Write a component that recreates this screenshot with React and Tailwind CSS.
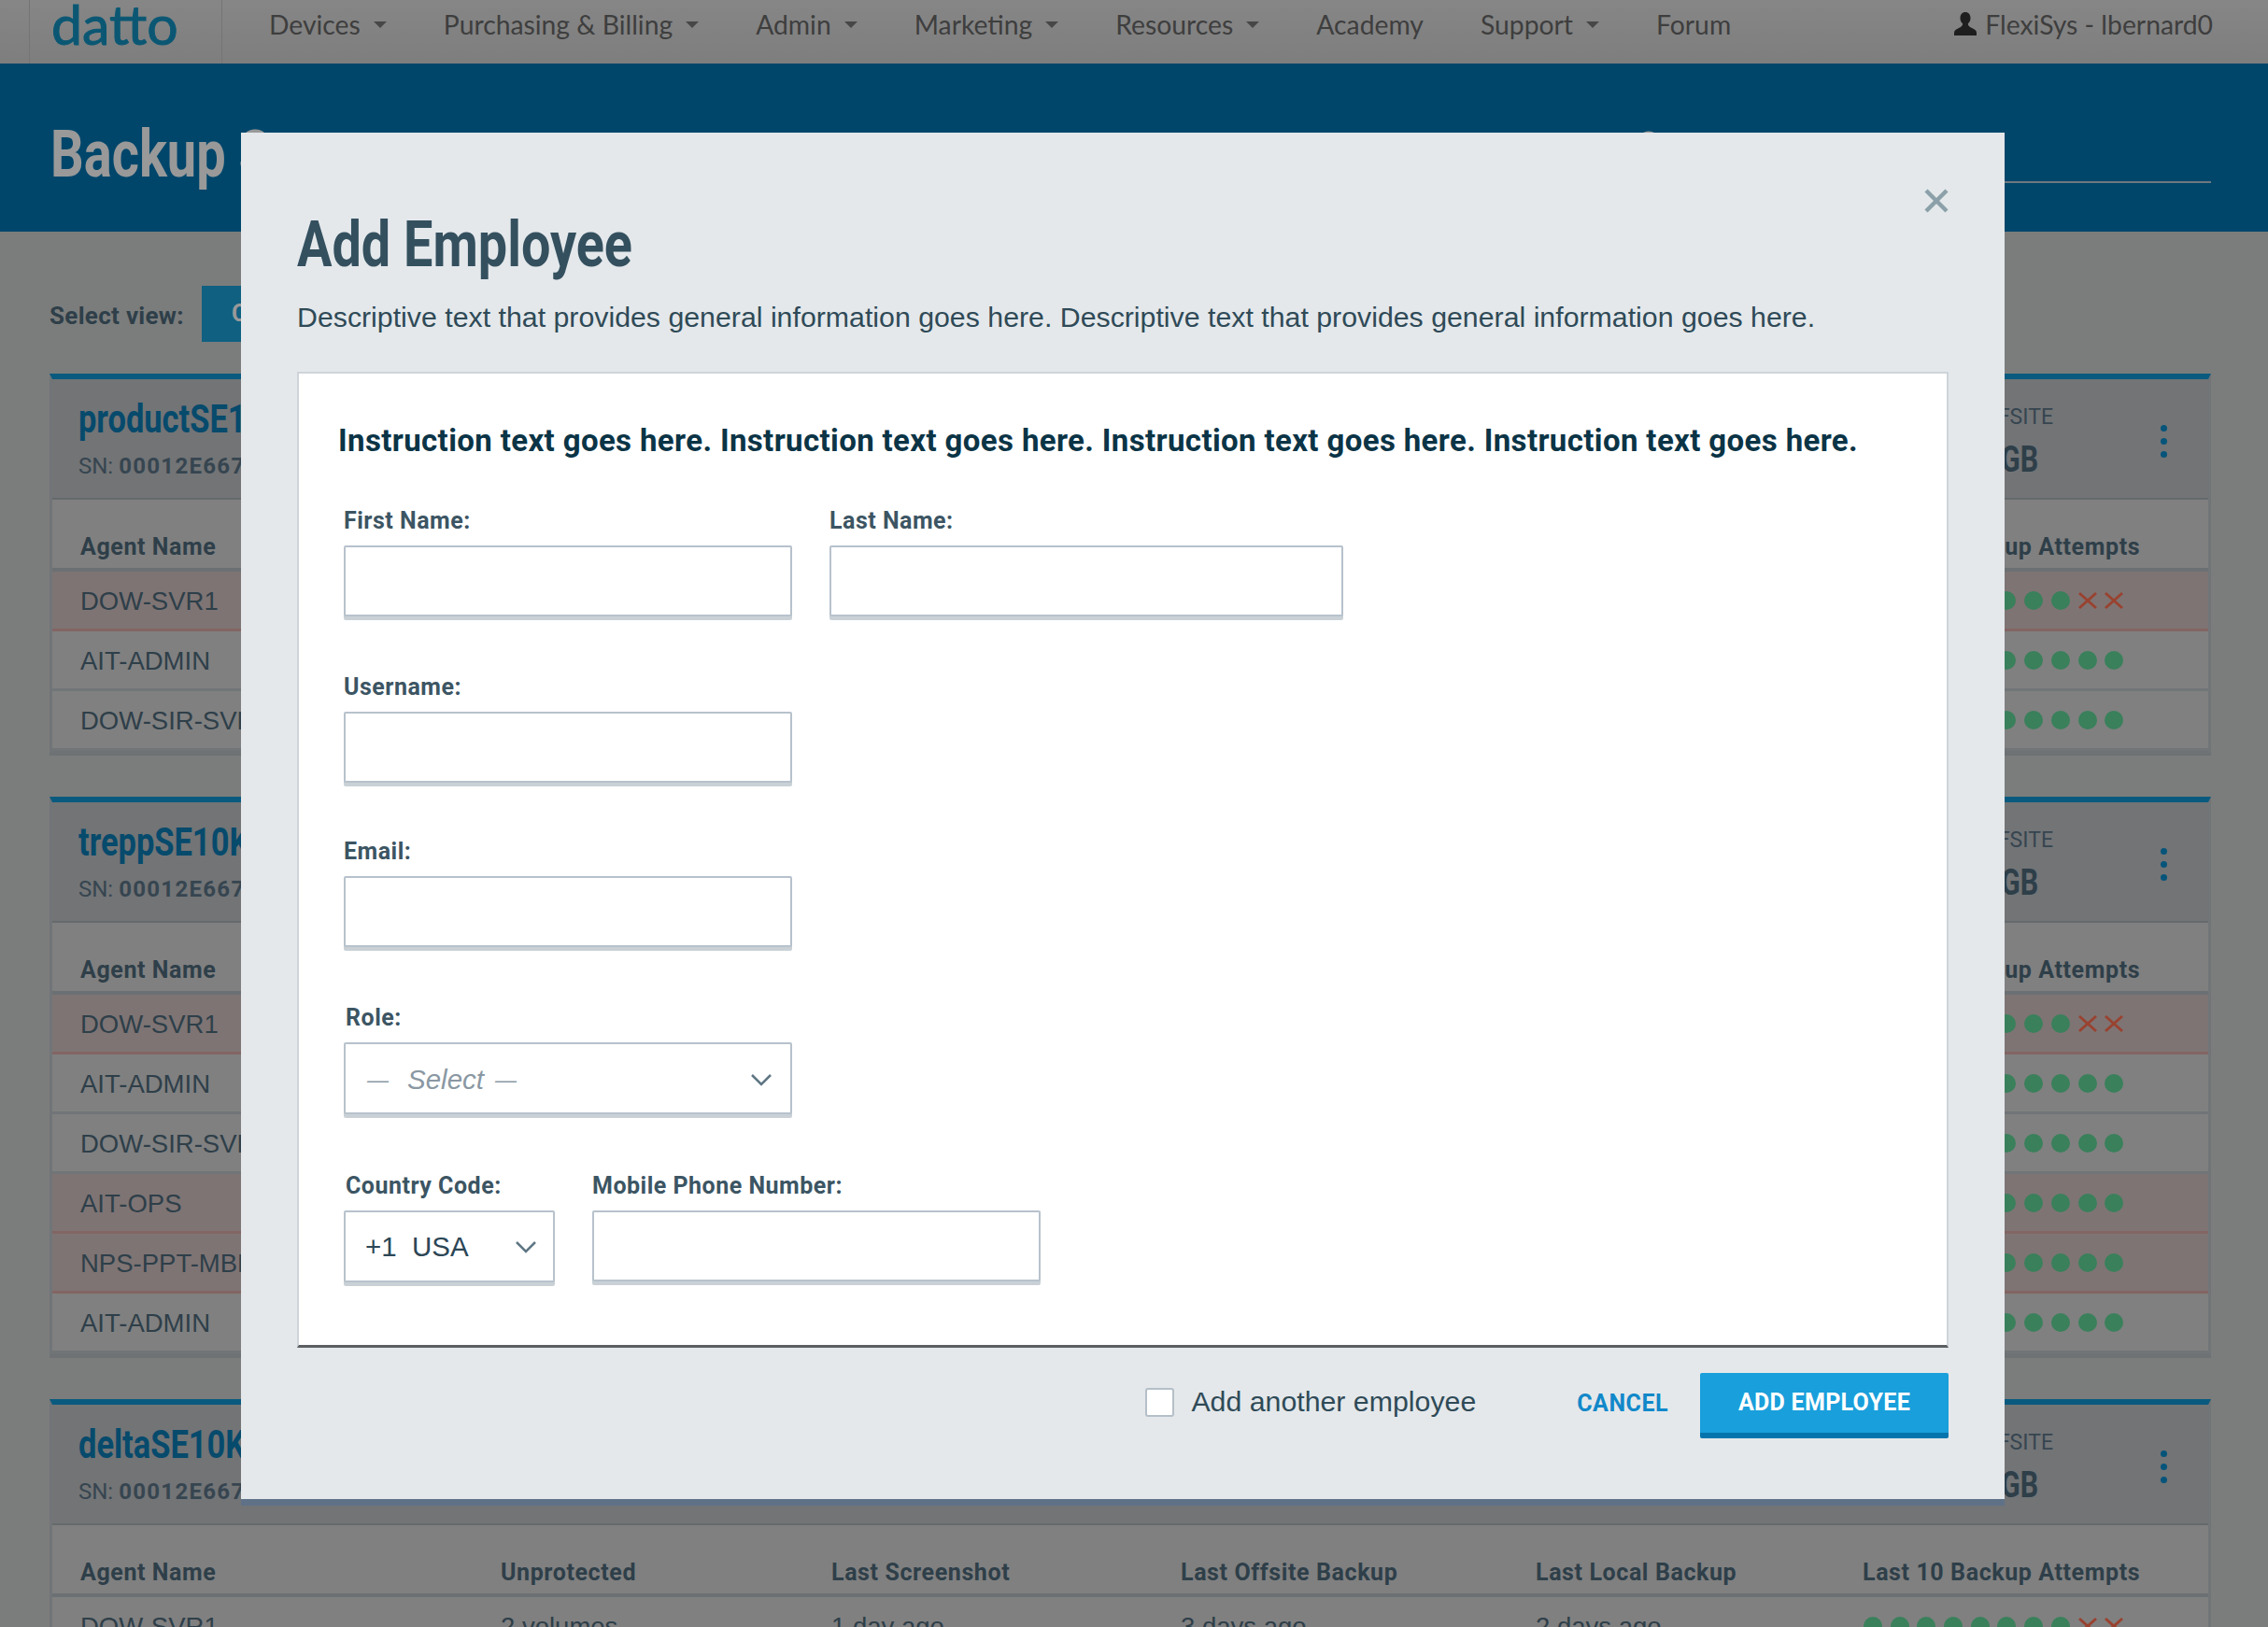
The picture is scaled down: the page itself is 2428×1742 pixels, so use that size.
import { useState } from "react";

const din = "font-['Roboto',sans-serif]";
const helv = "font-['Liberation_Sans',Arial,sans-serif]";
const lato = "font-['Lato',sans-serif]";
// no condensed face is installed, so headings are Roboto squeezed horizontally
const condensed = "font-['Roboto',sans-serif] font-bold inline-block whitespace-nowrap origin-left";

const navItems = [
  { label: "Devices", caret: true },
  { label: "Purchasing & Billing", caret: true },
  { label: "Admin", caret: true },
  { label: "Marketing", caret: true },
  { label: "Resources", caret: true },
  { label: "Academy" },
  { label: "Support", caret: true },
  { label: "Forum" },
];

const cards = [
  {
    name: "productSE10K",
    rows: [
      { agent: "DOW-SVR1", alert: true, fails: 2 },
      { agent: "AIT-ADMIN" },
      { agent: "DOW-SIR-SVR" },
    ],
  },
  {
    name: "treppSE10K",
    rows: [
      { agent: "DOW-SVR1", alert: true, fails: 2 },
      { agent: "AIT-ADMIN" },
      { agent: "DOW-SIR-SVR" },
      { agent: "AIT-OPS", alert: true },
      { agent: "NPS-PPT-MBP", alert: true },
      { agent: "AIT-ADMIN" },
    ],
  },
  {
    name: "deltaSE10K",
    rows: [{ agent: "DOW-SVR1", fails: 2 }],
  },
];

const columns = ["Agent Name", "Unprotected", "Last Screenshot", "Last Offsite Backup", "Last Local Backup", "Last 10 Backup Attempts"];
const tableGrid = "grid grid-cols-[450px_354px_374px_380px_350px_1fr] pl-[30px]";
const labelClass = `${din} block h-[30px] mb-[11px] text-[25px] leading-[30px] font-bold text-[#3c5563] tracking-[0.5px]`;

function Attempts({ fails = 0 }) {
  return (
    <div className="flex items-center gap-[8.7px]">
      {Array.from({ length: 10 }).map((_, i) =>
        i >= 10 - fails ? (
          <svg key={i} width="20" height="20" viewBox="0 0 20 20" className="text-[#ff6f50]">
            <path d="M1 2 L19 18 M19 2 L1 18" stroke="currentColor" strokeWidth="3" />
          </svg>
        ) : (
          <span key={i} className="w-5 h-5 rounded-full bg-[#60d698]" />
        )
      )}
    </div>
  );
}

function DeviceCard({ card }) {
  return (
    <div className="border-t-[6px] border-[#1296d4] border-x-[3px] border-x-[#bcc4c8] border-b-2 border-b-[#b7bfc2] shadow-[0_3px_0_#b7bfc2]">
      <div className="h-[129px] bg-[#bec1c5] border-b-2 border-[#a9b1b5] pl-[28px] pr-[44px] flex items-start justify-between">
        <div>
          <div className="h-[50px] mt-[18px] leading-[50px]">
            <span className={`${condensed} text-[42px] scale-x-[0.82] text-[#0a7cb4]`}>{card.name}</span>
          </div>
          <div className={`${din} text-[24px] leading-[30px] mt-[10px] text-[#5b7485]`}>
            SN: <span className="font-bold tracking-[1.3px]">00012E6672C4</span>
          </div>
        </div>
        <div className="flex items-center">
          <div className="mr-[115px] mt-[28px] text-right">
            <div className={`${din} text-[23px] leading-[26px] text-[#5b7485]`}>OFFSITE</div>
            <div className="mt-[10px] h-[44px] leading-[44px] pr-[16px]">
              <span className={`${condensed} !origin-right text-[38px] scale-x-[0.8] text-[#4e6a7b]`}>84 GB</span>
            </div>
          </div>
          <div className="flex flex-col gap-[7px] mt-[24px]">
            <span className="w-[7px] h-[7px] rounded-full bg-[#0a8ccb]" />
            <span className="w-[7px] h-[7px] rounded-full bg-[#0a8ccb]" />
            <span className="w-[7px] h-[7px] rounded-full bg-[#0a8ccb]" />
          </div>
        </div>
      </div>
      <div className={`${tableGrid} h-[77px] bg-[#d5d5d5] border-b-4 border-[#b2bbc0] items-end pb-[5px]`}>
        {columns.map((c) => (
          <div key={c} className={`${din} text-[25px] leading-[34px] font-bold tracking-[0.6px] text-[#4e6a7b]`}>
            {c}
          </div>
        ))}
      </div>
      {card.rows.map((row, i) => (
        <div
          key={i}
          className={`${tableGrid} h-[64px] border-b-[3px] items-center ${helv} text-[27.500px] text-[#4e6a7b] ${
            row.alert ? "bg-[#d2c2c1] border-[#dba9a6]" : "bg-[#d5d5d5] border-[#bcc4c8]"
          }`}
        >
          <div className="pt-[2px]">{row.agent}</div>
          <div className="pt-[2px]">2 volumes</div>
          <div className="pt-[2px]">1 day ago</div>
          <div className="pt-[2px]">3 days ago</div>
          <div className="pt-[2px]">2 days ago</div>
          <div className="pl-[1px]">
            <Attempts fails={row.fails} />
          </div>
        </div>
      ))}
    </div>
  );
}

function Field({ label, width, className = "" }) {
  return (
    <div className={className}>
      <label className={labelClass}>{label}</label>
      <input
        type="text"
        className={`${width} block h-[76px] mb-[1px] bg-white border-2 border-[#b7c2cc] rounded-[2px] shadow-[0_4px_0_#c9d1d6]`}
      />
    </div>
  );
}

function Chevron({ className = "" }) {
  return (
    <svg width="24" height="14" viewBox="0 0 24 14" fill="none" className={`text-[#5f7684] ${className}`}>
      <path d="M2 2 L12 12 L22 2" stroke="currentColor" strokeWidth="2.500" />
    </svg>
  );
}

export default function App() {
  const [another, setAnother] = useState(false);

  return (
    <div className="relative w-[2428px] h-[1742px] overflow-hidden bg-[#cdd0cf]">
      {/* Page behind the modal */}
      <header className="h-[68px] bg-linear-to-b from-[#e0e0e0] to-[#d2d2d2] flex items-center">
        <div className="ml-[31px] w-[207px] h-full border-x border-[#c4c4c4] pl-[23px]">
          <span className={`${lato} block text-[59px] leading-[52px] text-[#1392c0] [-webkit-text-stroke:1px_#1392c0]`}>datto</span>
        </div>
        <nav className={`${lato} flex items-center gap-[61px] ml-[50px] mt-[-16px] text-[28.300px] text-[#686868]`}>
          {navItems.map((item) => (
            <div key={item.label} className="flex items-center gap-[14px]">
              {item.label}
              {item.caret && <span className="w-0 h-0 border-x-[7px] border-x-transparent border-t-[7px] border-t-[#777]" />}
            </div>
          ))}
        </nav>
        <div className={`${lato} ml-auto mr-[59px] mt-[-16px] flex items-center gap-[8px] text-[28.300px] text-[#686868]`}>
          <svg width="26" height="26" viewBox="0 0 26 26" className="text-[#333]">
            <path
              fill="currentColor"
              d="M13 0c3.400 0 5.500 2.600 5.500 6.200 0 2.600-1 4.900-2.700 6 .2 2.600 1.700 3.600 4.700 5 2.600 1.200 4.500 2.400 4.500 4.800V25H1v-3c0-2.400 1.900-3.600 4.500-4.800 3-1.400 4.500-2.400 4.700-5-1.700-1.100-2.700-3.400-2.700-6C7.500 2.600 9.600 0 13 0z"
            />
          </svg>
          FlexiSys - lbernard0
        </div>
      </header>

      <section className="h-[180px] bg-[#0075b2] pl-[54px] pr-[61px] flex items-start justify-between">
        <h1 className="h-[84px] mt-[55px] leading-[84px]">
          <span className={`${condensed} text-[70px] scale-x-[0.8] text-white`}>Backup Status</span>
        </h1>
        <div className="w-[617px] h-[128px] border-b-2 border-[#b9c9d2]">
          <svg width="34" height="34" viewBox="0 0 34 34" fill="none" className="mt-[70px] text-white">
            <circle cx="15" cy="15" r="11" stroke="currentColor" strokeWidth="3" />
          </svg>
        </div>
      </section>

      <main className="pl-[53px] pr-[61px]">
        <div className="flex items-center h-[60px] mt-[58px]">
          <span className={`${din} pt-[4px] text-[26px] font-bold tracking-[0.3px] text-[#4e6a7b] w-[163px]`}>Select view:</span>
          <button className={`${din} h-[60px] px-[32px] bg-[#19a0d8] text-[25px] font-bold text-white`}>Cards</button>
        </div>
        <div className="mt-[34px] flex flex-col gap-[47px]">
          {cards.map((card) => (
            <DeviceCard key={card.name} card={card} />
          ))}
        </div>
      </main>

      {/* Dimmed backdrop */}
      <div className="absolute inset-0 bg-black/40" />

      {/* Add Employee modal */}
      <div className="absolute left-[258px] top-[142px] w-[1888px] h-[1470px] bg-[#e4e8eb] border-b-[7px] border-[#5f7187] px-[60px]">
        <button className="absolute right-[60px] top-[60px] text-[#8ba0a8]">
          <svg width="26" height="26" viewBox="0 0 26 26" fill="none">
            <path d="M2 2 L24 24 M24 2 L2 24" stroke="currentColor" strokeWidth="4.500" />
          </svg>
        </button>

        <h2 className="pt-[84px] h-[156px] leading-[72px]">
          <span className={`${condensed} text-[68px] scale-x-[0.82] text-[#34505f]`}>Add Employee</span>
        </h2>
        <p className={`${helv} mt-[22px] text-[30.300px] leading-[40px] text-[#2f4a57] whitespace-nowrap`}>
          Descriptive text that provides general information goes here. Descriptive text that provides general information goes here.
        </p>

        <div className="mt-[38px] h-[1045px] bg-white border-2 border-[#ced4da] border-b-[3px] border-b-[#5b5f62] pl-[42px] pt-[52px] box-border">
          <p className={`${din} text-[33px] leading-[40px] font-bold tracking-[0.37px] text-[#0b3446] whitespace-nowrap`}>
            Instruction text goes here. Instruction text goes here. Instruction text goes here. Instruction text goes here.
          </p>

          <div className="ml-[6px] mt-[51px] flex flex-col">
            <div className="flex gap-[40px]">
              <Field label="First Name:" width="w-[480px]" />
              <Field label="Last Name:" width="w-[550px]" />
            </div>
            <Field label="Username:" width="w-[480px]" className="mt-[60px]" />
            <Field label="Email:" width="w-[480px]" className="mt-[58px]" />

            <div className="mt-[60px]">
              <label className={`${labelClass} ml-[2px]`}>Role:</label>
              <div className="w-[480px] h-[77px] bg-white border-2 border-[#b7c2cc] rounded-[2px] shadow-[0_4px_0_#c9d1d6] pl-[23px] pr-[19px] flex items-center justify-between">
                <span className={`${helv} italic pt-[4px] text-[29.500px] text-[#8a98a3] flex items-center`}>
                  <span className="text-[23px] mr-[20px]">—</span>
                  Select
                  <span className="text-[23px] ml-[12px]">—</span>
                </span>
                <Chevron className="mt-[3px]" />
              </div>
            </div>

            <div className="mt-[62px] flex gap-[40px]">
              <div>
                <label className={`${labelClass} ml-[2px]`}>Country Code:</label>
                <div className="w-[226px] h-[77px] bg-white border-2 border-[#b7c2cc] rounded-[2px] shadow-[0_4px_0_#c9d1d6] pl-[21px] pr-[17px] flex items-center justify-between">
                  <span className={`${helv} pt-[2px] text-[29.500px] text-[#2c4656]`}>+1&nbsp; USA</span>
                  <Chevron />
                </div>
              </div>
              <Field label="Mobile Phone Number:" width="w-[480px]" />
            </div>
          </div>
        </div>

        <div className="mt-[27px] flex items-start justify-end">
          <label className={`${helv} h-[62px] flex items-center gap-[18px] text-[30.300px] text-[#2f4a57]`}>
            <input
              type="checkbox"
              checked={another}
              onChange={(e) => setAnother(e.target.checked)}
              className="appearance-none w-[31px] h-[31px] bg-white border-2 border-[#b5bfc8] rounded-[3px]"
            />
            Add another employee
          </label>
          <button className={`${din} ml-[108px] h-[65px] text-[25px] font-bold tracking-[0.5px] text-[#1188c9]`}>CANCEL</button>
          <button className={`${din} ml-[34px] w-[266px] h-[70px] bg-[#199fdb] border-b-[6px] border-[#0574ac] rounded-[2px] text-[25px] font-bold tracking-[0.3px] text-white`}>
            ADD EMPLOYEE
          </button>
        </div>
      </div>
    </div>
  );
}
